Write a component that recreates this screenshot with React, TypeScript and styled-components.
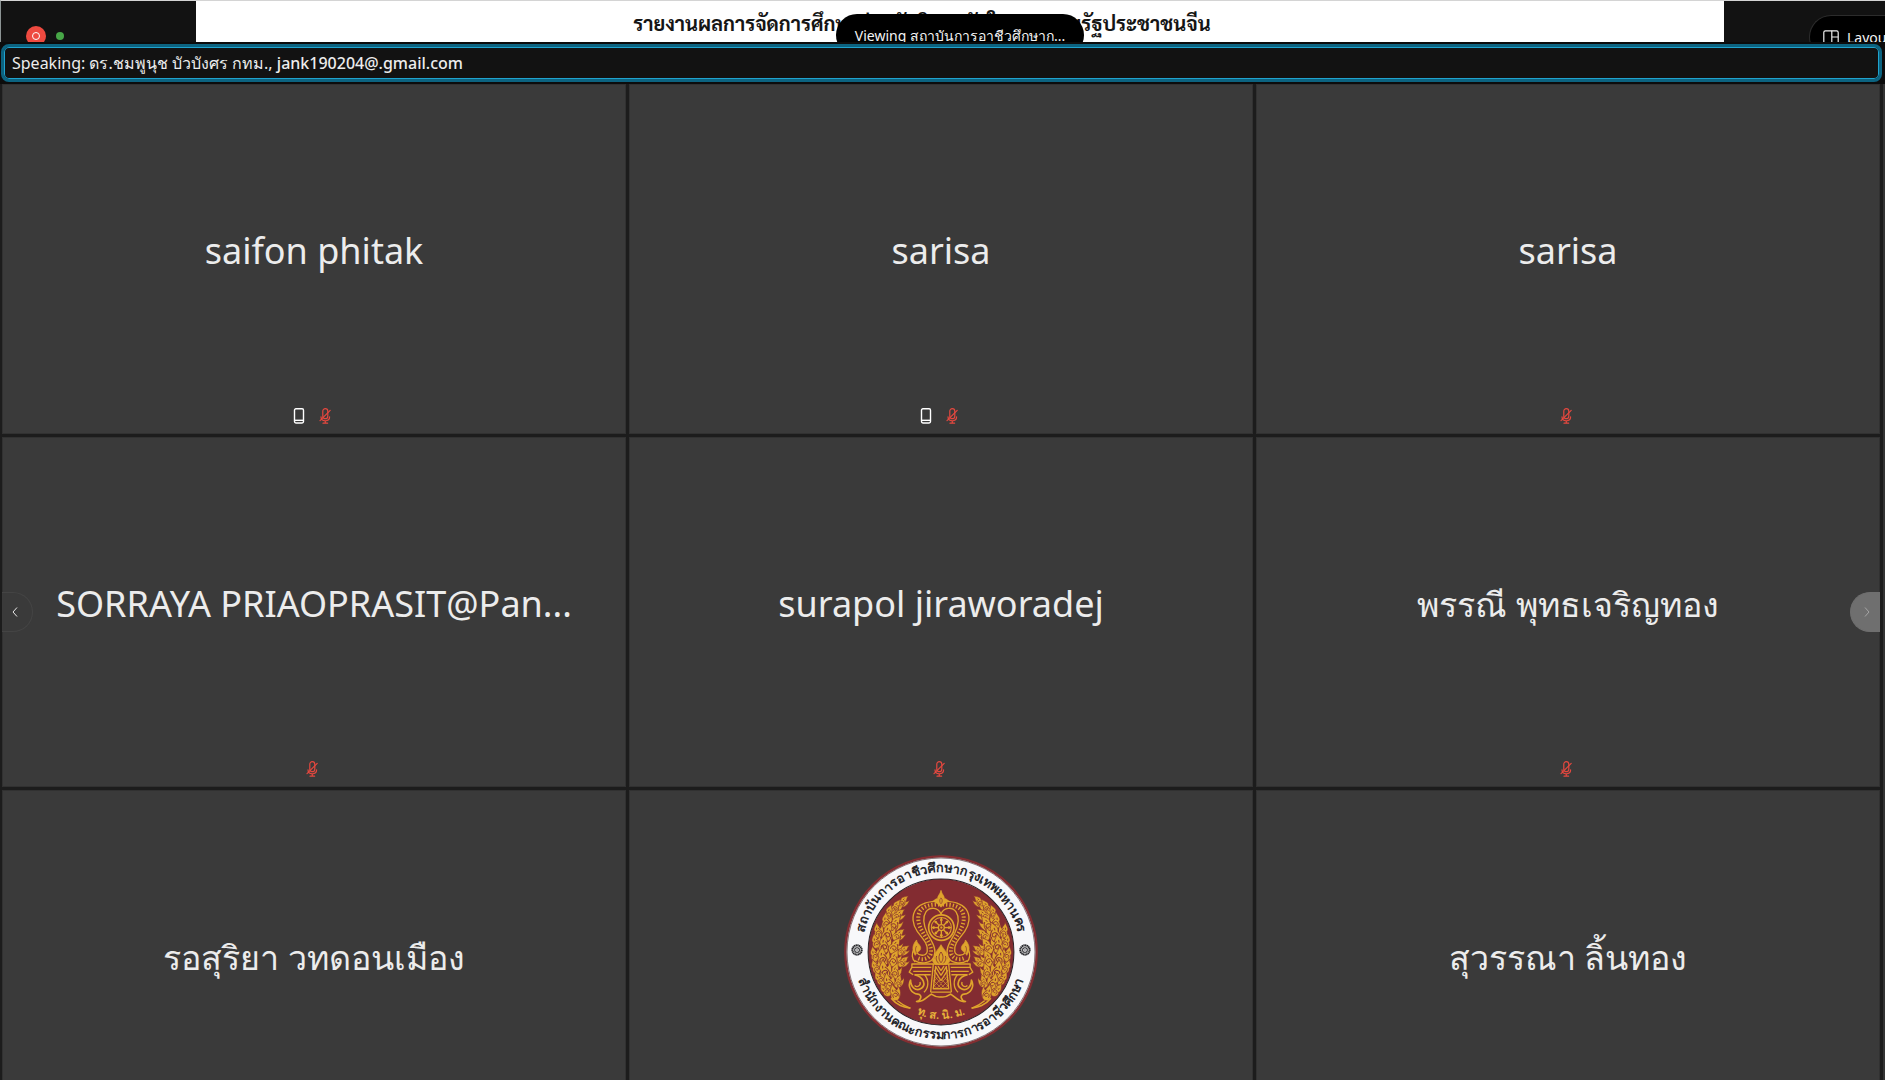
import React from "react";
import styled, { createGlobalStyle } from "styled-components";

const GlobalStyle = createGlobalStyle`
  * { box-sizing: border-box; }
  body { margin: 0; background: #0c0c0c; overflow: hidden; }
  button { font: inherit; }
`;

const Meeting = styled.div`
  display: flex;
  flex-direction: column;
  height: 100vh;
  overflow: hidden;
  background: #0c0c0c;
  color: #ececec;
  font-family: "Noto Sans", "Open Sans", sans-serif;
`;

const ShareStrip = styled.header`
  display: grid;
  grid-template-columns: 195px 1fr 161px;
  flex: none;
  height: 42px;
  overflow: hidden;
  border-top: 1px solid #d4d4d4;
  border-left: 1px solid #8c9494;
  background: #121212;
`;

const Status = styled.div`
  display: flex;
  align-items: flex-start;
  gap: 10px;
  padding: 25px 0 0 25px;
`;

const RecordDot = styled.span`
  display: grid;
  place-items: center;
  width: 20px;
  height: 20px;
  border-radius: 50%;
  background: #ee4a40;

  &::after {
    content: "";
    width: 6px;
    height: 6px;
    border: 1px solid #fff;
    border-radius: 50%;
  }
`;

const LiveDot = styled.span`
  width: 8px;
  height: 8px;
  margin-top: 6px;
  border-radius: 50%;
  background: #47a647;
`;

const SharedPage = styled.div`
  position: relative;
  background: #fff;
`;

const ShareTitle = styled.h1`
  margin: 0;
  padding: 7px 76px 0 0;
  color: #151515;
  font: 700 20px/30px "Sarabun", "Noto Sans", sans-serif;
  text-align: center;
  white-space: nowrap;
`;

const ViewingPill = styled.div`
  position: absolute;
  top: 13px;
  left: 50%;
  transform: translateX(-50%);
  width: 248px;
  height: 42px;
  padding: 0 18px;
  border-radius: 21px;
  background: #000;
  color: #f4f4f4;
  font-size: 14px;
  line-height: 44px;
  text-align: center;
  white-space: nowrap;
`;

const Tools = styled.div`
  display: flex;
  justify-content: flex-end;
  overflow: hidden;
`;

const LayoutButton = styled.button`
  display: flex;
  align-items: center;
  gap: 8px;
  flex: none;
  width: 76px;
  height: 44px;
  margin-top: 14px;
  padding: 0 0 0 13px;
  overflow: hidden;
  border: 1px solid #2c2c2c;
  border-right: 0;
  border-radius: 22px 0 0 22px;
  background: #000;
  color: #f4f4f4;
  font-size: 14px;
  white-space: nowrap;

  svg { flex: none; }
`;

const SpeakingBar = styled.div`
  flex: none;
  height: 38px;
  margin: 2px 3px 2px 1px;
  padding: 0 8px;
  border: 3px solid #0c6380;
  border-radius: 8px;
  background: #121212;
  box-shadow: inset 0 0 0 1px #1fa3ce;
  font-size: 16px;
  line-height: 32px;
  white-space: nowrap;

  strong { font-weight: 500; }
`;

const Gallery = styled.main`
  position: relative;
  flex: none;
  padding: 0 3px 0 2px;
  background: #1c1c1c;
  border-right: 2px solid #333;
`;

const Grid = styled.div`
  display: grid;
  grid-template-columns: repeat(3, 1fr);
  gap: 3px;
`;

const Tile = styled.article`
  display: flex;
  flex-direction: column;
  aspect-ratio: 624 / 350;
  min-width: 0;
  background: #3a3a3a;
  box-shadow: inset 0 0 0 1px #313131;
`;

const Stage = styled.div`
  display: flex;
  flex: 1;
  align-items: center;
  justify-content: center;
  min-height: 0;
`;

const Name = styled.h2<{ $thai?: boolean }>`
  margin: 0;
  padding-top: 10px;
  font-size: ${(p) => (p.$thai ? 34 : 36)}px;
  font-weight: 400;
  line-height: 48px;
  white-space: nowrap;
`;

const Indicators = styled.footer`
  display: flex;
  justify-content: center;
  gap: 10px;
  height: 26px;
  padding-right: 4px;
`;

const PageButton = styled.button<{ $side: "left" | "right" }>`
  position: absolute;
  top: 50%;
  ${(p) => p.$side}: ${(p) => (p.$side === "left" ? 2 : 3)}px;
  display: flex;
  align-items: center;
  justify-content: ${(p) => (p.$side === "left" ? "flex-start" : "flex-end")};
  width: ${(p) => (p.$side === "left" ? 31 : 30)}px;
  height: 40px;
  padding: 0 8px;
  transform: translateY(-50%);
  border: 1px solid ${(p) => (p.$side === "left" ? "#444" : "#6f6f6f")};
  border-${(p) => p.$side}: 0;
  border-radius: ${(p) => (p.$side === "left" ? "0 20px 20px 0" : "20px 0 0 20px")};
  background: ${(p) => (p.$side === "left" ? "#3a3a3a" : "#6f6f6f")};
  color: ${(p) => (p.$side === "left" ? "#e8e8e8" : "#a5a5a5")};
`;

const Chevron = ({ left }: { left?: boolean }) => (
  <svg width="10" height="12" viewBox="0 0 10 12" fill="none" stroke="currentColor" strokeWidth="1" aria-hidden="true">
    <path d={left ? "M7 1.5L3 6l4 4.5" : "M3 1.5L7 6l-4 4.5"} />
  </svg>
);

const PhoneIcon = () => (
  <svg width="16" height="16" viewBox="0 0 16 16" fill="none" stroke="#fff" strokeWidth="1.4" role="img" aria-label="Phone">
    <rect x="3.500" y="0.8" width="9" height="14.200" rx="1.400" />
    <path d="M3.500 12.300h9" />
  </svg>
);

const MutedIcon = () => (
  <svg width="16" height="16" viewBox="0 0 16 16" fill="none" stroke="#e5483f" strokeWidth="1.2" strokeLinecap="round" role="img" aria-label="Muted">
    <rect x="5.800" y="0.700" width="5" height="10" rx="2.500" />
    <path d="M4 8.800c0 2.600 1.700 4 4.300 4s4.300-1.400 4.300-4M8.300 12.800v2.400M6 15.200h4.600M13.200 2.400L3 12.600" />
  </svg>
);

const LayoutIcon = () => (
  <svg width="16" height="14" viewBox="0 0 16 14" fill="none" stroke="#f0f0f0" strokeWidth="1.2" aria-hidden="true">
    <rect x="0.8" y="0.8" width="14.400" height="12.400" rx="1.600" />
    <path d="M8.800 0.800v12.400M8.800 7h6.400" />
  </svg>
);

const EmblemSvg = styled.svg`
  display: block;
  width: 194px;
  height: 194px;
  font-family: "Noto Sans", sans-serif;
`;

/* x, y, rotation, scale of each flame leaf in the left spray */
const LEAVES: [number, number, number, number][] = [
  [220, 192, 30, 0.9],
  [200, 208, 18, 1],
  [180, 226, 4, 1],
  [206, 232, 36, 1],
  [172, 252, -12, 1.1],
  [196, 260, 24, 1.2],
  [148, 280, -20, 1],
  [176, 286, 6, 1.3],
  [206, 292, 34, 1],
  [142, 312, -24, 1],
  [166, 322, -6, 1.3],
  [196, 326, 22, 1.2],
  [220, 338, 40, 0.9],
  [138, 350, -26, 1],
  [162, 360, -12, 1.3],
  [194, 364, 14, 1.2],
  [220, 372, 34, 0.9],
  [142, 388, -34, 1],
  [168, 398, -20, 1.3],
  [198, 402, 6, 1.1],
  [154, 422, -44, 1],
  [180, 434, -24, 1.2],
  [208, 432, 6, 0.9],
  [172, 456, -50, 1],
  [198, 466, -26, 1.1],
];

const Spray = () => (
  <g>
    <path d="M242 508C190 488 146 430 138 360" fill="none" stroke="#dfa42c" strokeWidth="4" />
    {LEAVES.map(([x, y, r, s]) => (
      <g key={`${x}-${y}`} transform={`translate(${x} ${y}) rotate(${r}) scale(${s})`}>
        <path d="M-2 18C-15 16-17 2-9-5C-13-13-5-18 6-29C3-20 9-16 8-8C13-10 15-14 16-19C20-5 15 14-2 18Z" fill="#dfa42c" stroke="#832c31" strokeWidth="1.500" />
        <path d="M-8 7C-10-4 3-6 5 2C5 8-3 9-3 3M3-10C8-4 11 2 7 11M-1-14L-3-8" fill="none" stroke="#832c31" strokeWidth="2.200" />
      </g>
    ))}
    <path d="M186 478C204 500 222 504 244 508" fill="none" stroke="#dfa42c" strokeWidth="5" />
  </g>
);

/* left half of the arch, side flame and pedestal; the right half is its mirror */
const ThroneHalf = () => (
  <g fill="none" stroke="#dfa42c" strokeWidth="4" strokeLinejoin="round">
    <path d="M335 186C310 190 278 188 260 212C246 232 250 258 264 278C278 298 298 316 294 338C290 354 270 352 262 342" />
    <path d="M335 226C326 206 302 204 290 220C278 238 284 262 294 284C306 308 324 330 314 354C306 374 276 378 256 366" />
    <path d="M330 198C308 198 284 200 272 218C262 238 268 260 280 280C292 302 310 324 304 346C298 362 276 366 262 356" strokeWidth="12" strokeDasharray="4 6" />
    <path d="M262 304C246 322 250 338 258 350C264 338 276 338 274 326C272 316 262 314 262 304Z" fill="#dfa42c" strokeWidth="2" />
    <path d="M254 332C246 344 248 362 258 370" />
    <path d="M262 322C256 332 260 338 262 344" stroke="#832c31" strokeWidth="2" />
    <path d="M335 376H248V386H306M252 398H306M256 408H304" />
    <path d="M248 386L240 400L252 408M312 376L304 460" />
    <path d="M256 408C284 414 292 440 274 450C260 458 244 446 244 424C234 444 246 464 266 466C280 468 276 484 262 488C282 492 292 474 306 466C318 474 326 476 335 474" strokeWidth="5" />
    <path d="M286 408C300 424 298 448 284 460M256 440C264 448 276 440 272 430" />
    <path d="M304 460H335M319 384L312 450H335" />
    <path d="M318 382L335 410M326 382L335 396M315 394L335 426" />
    <path d="M312 424L335 448M312 438L324 450M314 410L335 434M312 444L335 420M322 450L335 436M313 430L324 416" strokeWidth="2" />
    <path d="M335 156C332 168 324 172 325 180C318 180 316 186 310 188C320 192 326 196 335 206Z" fill="#dfa42c" strokeWidth="1.500" />
    <path d="M335 178C330 184 330 190 335 196" stroke="#832c31" strokeWidth="2" />
  </g>
);

const SPOKES = [0, 45, 90, 135, 180, 225, 270, 315];

const Mirrored = ({ children }: { children: React.ReactNode }) => (
  <>
    {children}
    <g transform="translate(670 0) scale(-1 1)">{children}</g>
  </>
);

const Emblem = () => (
  <EmblemSvg viewBox="45 50 580 580" role="img" aria-label="สถาบันการอาชีวศึกษากรุงเทพมหานคร">
    <defs>
      <path id="ring-top" d="M97 340A238 238 0 0 1 573 340" />
      <path id="ring-bottom" d="M74 340A261 261 0 0 0 596 340" />
      <path id="motto" d="M135 340A200 200 0 0 0 535 340" />
    </defs>
    <circle cx="335" cy="340" r="286" fill="#f8f8fa" stroke="#842e32" strokeWidth="7" />
    <circle cx="335" cy="340" r="281" fill="none" stroke="#4a3034" strokeWidth="2" />
    <circle cx="335" cy="340" r="218" fill="#832c31" stroke="#2a2226" strokeWidth="3" />
    <g fill="#26262a" fontSize="38" fontWeight="600" textAnchor="middle">
      <text><textPath href="#ring-top" startOffset="50%">สถาบันการอาชีวศึกษากรุงเทพมหานคร</textPath></text>
      <text><textPath href="#ring-bottom" startOffset="50%">สำนักงานคณะกรรมการการอาชีวศึกษา</textPath></text>
    </g>
    <Mirrored>
      <circle cx="84" cy="334" r="14" fill="#ddd" stroke="#26262a" strokeWidth="6" strokeDasharray="4 1" />
      <circle cx="84" cy="334" r="7" fill="#f8f8fa" stroke="#26262a" strokeWidth="3" />
      <circle cx="84" cy="334" r="2" fill="#26262a" />
      <Spray />
      <ThroneHalf />
    </Mirrored>
    <g stroke="#dfa42c" fill="none">
      <circle cx="336" cy="267" r="38" strokeWidth="5" fill="#832c31" />
      <circle cx="336" cy="267" r="30" strokeWidth="3" />
      <circle cx="336" cy="267" r="9" strokeWidth="4" />
      {SPOKES.map((a) => (
        <g key={a} transform={`rotate(${a} 336 267)`}>
          <path d="M336 257V238" strokeWidth="4" />
          <circle cx="336" cy="244" r="4" fill="#dfa42c" stroke="none" />
        </g>
      ))}
      <circle cx="336" cy="267" r="3" fill="#dfa42c" />
      <path d="M335 318C326 334 312 344 316 360C304 354 308 372 320 378H350C364 372 366 354 354 360C358 344 344 334 335 318Z" fill="#dfa42c" strokeWidth="2" />
      <path d="M335 340C326 352 328 364 335 372C342 364 344 352 335 340M322 352C318 362 324 370 328 374M348 352C352 362 346 370 342 374" stroke="#832c31" strokeWidth="2.500" />
    </g>
    <text fill="#e6b13a" fontSize="33" fontWeight="600" textAnchor="middle">
      <textPath href="#motto" startOffset="50%">ทุ. ส. นิ. ม.</textPath>
    </text>
  </EmblemSvg>
);

type Person = { id: number; name?: string; thai?: boolean; phone?: boolean };

const PEOPLE: Person[] = [
  { id: 1, name: "saifon phitak", phone: true },
  { id: 2, name: "sarisa", phone: true },
  { id: 3, name: "sarisa" },
  { id: 4, name: "SORRAYA PRIAOPRASIT@Pan..." },
  { id: 5, name: "surapol jiraworadej" },
  { id: 6, name: "พรรณี พุทธเจริญทอง", thai: true },
  { id: 7, name: "รอสุริยา วทดอนเมือง", thai: true },
  { id: 8 },
  { id: 9, name: "สุวรรณา ลิ้นทอง", thai: true },
];

export default function App() {
  return (
    <Meeting>
      <GlobalStyle />
      <ShareStrip>
        <Status>
          <RecordDot />
          <LiveDot />
        </Status>
        <SharedPage>
          <ShareTitle>รายงานผลการจัดการศึกษาร่วมกับวิทยาลัยในสาธารณรัฐประชาชนจีน</ShareTitle>
          <ViewingPill>Viewing สถาบันการอาชีวศึกษาก...</ViewingPill>
        </SharedPage>
        <Tools>
          <LayoutButton type="button">
            <LayoutIcon />
            Layout
          </LayoutButton>
        </Tools>
      </ShareStrip>
      <SpeakingBar>
        Speaking: ดร.ชมพูนุช บัวบังศร กทม., <strong>jank190204@.gmail.com</strong>
      </SpeakingBar>
      <Gallery>
        <Grid>
          {PEOPLE.map((p) => (
            <Tile key={p.id}>
              <Stage>{p.name ? <Name $thai={p.thai}>{p.name}</Name> : <Emblem />}</Stage>
              <Indicators>
                {p.phone && <PhoneIcon />}
                <MutedIcon />
              </Indicators>
            </Tile>
          ))}
        </Grid>
        <PageButton type="button" $side="left" aria-label="Previous page">
          <Chevron left />
        </PageButton>
        <PageButton type="button" $side="right" aria-label="Next page">
          <Chevron />
        </PageButton>
      </Gallery>
    </Meeting>
  );
}
